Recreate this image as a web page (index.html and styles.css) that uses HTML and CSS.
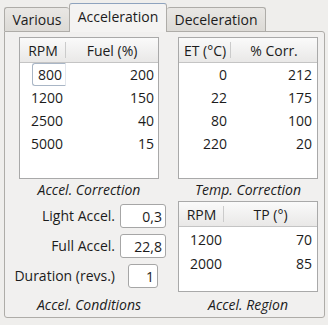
FILE: index.html
```html
<!DOCTYPE html>
<html lang="en">
<head>
    <meta charset="UTF-8">
    <title>Acceleration</title>
    <link rel="stylesheet" href="styles.css">
</head>
<body>
    <div class="tabbar">
        <div class="tab tab-various">Various</div>
        <div class="tab tab-active">Acceleration</div>
        <div class="tab tab-decel">Deceleration</div>
    </div>
    <div class="pane">
        <div class="tbl tbl-fuel">
            <table>
                <thead>
                    <tr><th>RPM</th><th>Fuel (%)</th></tr>
                </thead>
                <tbody>
                    <tr><td><span class="editor">800</span></td><td>200</td></tr>
                    <tr><td>1200</td><td>150</td></tr>
                    <tr><td>2500</td><td>40</td></tr>
                    <tr><td>5000</td><td>15</td></tr>
                </tbody>
            </table>
        </div>
        <div class="tbl tbl-temp">
            <table>
                <thead>
                    <tr><th>ET (°C)</th><th>% Corr.</th></tr>
                </thead>
                <tbody>
                    <tr><td>0</td><td>212</td></tr>
                    <tr><td>22</td><td>175</td></tr>
                    <tr><td>80</td><td>100</td></tr>
                    <tr><td>220</td><td>20</td></tr>
                </tbody>
            </table>
        </div>
        <div class="caption">Accel. Correction</div>
        <div class="caption">Temp. Correction</div>

        <div class="conds">
            <label for="light">Light Accel.</label>
            <input id="light" class="num" type="text" value="0,3">
            <label for="full">Full Accel.</label>
            <input id="full" class="num" type="text" value="22,8">
            <label for="dur">Duration (revs.)</label>
            <input id="dur" class="num num-small" type="text" value="1">
        </div>
        <div class="tbl tbl-region">
            <table>
                <thead>
                    <tr><th>RPM</th><th>TP (°)</th></tr>
                </thead>
                <tbody>
                    <tr><td>1200</td><td>70</td></tr>
                    <tr><td>2000</td><td>85</td></tr>
                </tbody>
            </table>
        </div>
        <div class="caption caption-low">Accel. Conditions</div>
        <div class="caption caption-low">Accel. Region</div>
    </div>
</body>
</html>
```

FILE: styles.css
```css
body {
    margin: 0;
    width: 328px;
    height: 325px;
    background: #efeeec;
    font-family: 'Open Sans', 'DejaVu Sans', sans-serif;
    font-size: 14px;
    color: #1c1c1c;
}

.tabbar {
    display: flex;
    align-items: flex-end;
    height: 31px;
    padding-left: 4px;
}

.tab {
    box-sizing: border-box;
    height: 24px;
    line-height: 24px;
    text-align: center;
    border: 1px solid #aeaca8;
    border-bottom: none;
    border-radius: 3px 3px 0 0;
    background: linear-gradient(#e9e7e4, #dcdad6);
}

.tab-various {
    width: 65px;
    border-right: none;
}

.tab-active {
    width: 98px;
    height: 29px;
    line-height: 26px;
    margin-bottom: -1px;
    position: relative;
    z-index: 1;
    background: #f4f3f2;
    border-top-color: #8ea3be;
}

.tab-decel {
    width: 99px;
    border-left: none;
}

.pane {
    box-sizing: border-box;
    margin-left: 4px;
    width: 321px;
    height: 287px;
    border: 1px solid #aeaca8;
    border-radius: 0 3px 3px 3px;
    background: #f1f0ef;
    padding: 5px 6px 0 14px;
    display: grid;
    grid-template-columns: 147px 140px;
    grid-template-rows: 142px 22px 90px 26px;
    column-gap: 12px;
}

.tbl {
    box-sizing: border-box;
    width: 140px;
    border: 1px solid #a9a9a9;
    background: #fff;
}

.tbl-region {
    height: 91px;
}

table {
    border-collapse: collapse;
    width: 100%;
}

th {
    height: 24px;
    padding: 0;
    font-weight: normal;
    text-align: center;
    background: linear-gradient(#fafafa, #e9e8e7);
    border-bottom: 1px solid #c4c4c4;
}

th:first-child {
    background:
        linear-gradient(#cbcbcb, #cbcbcb) right 4px / 1px 16px no-repeat,
        linear-gradient(#fafafa, #e9e8e7);
}

td {
    height: 23px;
    padding: 0;
    text-align: right;
}

.tbl-fuel th:first-child { width: 46px; }
.tbl-fuel td:first-child { padding-right: 3px; }
.tbl-fuel td:last-child { padding-right: 4px; }

.tbl-temp th:first-child { width: 52px; }
.tbl-temp td:first-child { padding-right: 4px; }
.tbl-temp td:last-child { padding-right: 5px; }

.tbl-region th:first-child { width: 45px; }
.tbl-region td:first-child { padding-right: 2px; height: 24px; }
.tbl-region td:last-child { padding-right: 5px; }

.editor {
    display: inline-block;
    box-sizing: border-box;
    width: 34px;
    height: 23px;
    line-height: 21px;
    margin-right: -3px;
    padding-right: 3px;
    border: 1px solid #a9b6c6;
    border-right-color: #e2e6ec;
    border-radius: 3px 0 0 3px;
    vertical-align: middle;
}

.caption {
    width: 140px;
    text-align: center;
    font-style: italic;
    line-height: 22px;
}

.caption-low {
    line-height: 27px;
}

.conds {
    margin-left: -14px;
    padding-top: 3px;
    display: grid;
    grid-template-columns: 110px auto;
    column-gap: 5px;
    row-gap: 6px;
    align-content: start;
}

.conds label {
    text-align: right;
    line-height: 24px;
    white-space: nowrap;
}

.num {
    box-sizing: border-box;
    width: 46px;
    height: 24px;
    padding: 0 3px 0 0;
    border: 1px solid #a6a6a6;
    border-radius: 3px;
    background: #fff;
    font: inherit;
    color: inherit;
    text-align: right;
}

.num-small {
    width: 30px;
    margin-left: 8px;
}
```
